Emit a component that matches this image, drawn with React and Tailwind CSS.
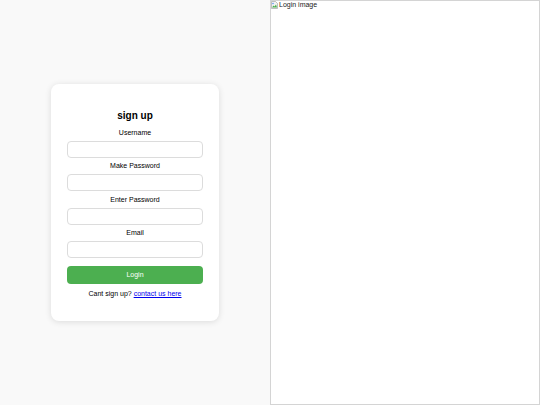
import React from "react";

const font = { fontFamily: '"Liberation Sans", Arial, sans-serif' };

function Field({ label, type = "text" }) {
  return (
    <div className="flex flex-col items-center">
      <label className="text-[7px] leading-[10px] text-black mb-[3px]">{label}</label>
      <input
        type={type}
        className="w-full h-[17px] rounded-[4px] border border-[#dcdcdc] bg-white mb-[3.5px] outline-none"
      />
    </div>
  );
}

// tiny broken-image glyph shown before the alt text
function BrokenImage() {
  return (
    <svg width="7" height="8" viewBox="0 0 7 8" className="shrink-0">
      <path d="M0.5 0.5h4l2 2v5h-6z" fill="#f2f2f2" stroke="#999" strokeWidth="0.6" />
      <path d="M1 6.5l1.5-2 1 1 1.5-2 1 3z" fill="#4caf50" />
      <circle cx="2" cy="2.5" r="0.7" fill="#3b82f6" />
    </svg>
  );
}

export default function App() {
  return (
    <div className="flex w-[540px] h-[405px] bg-[#f9f9f9]" style={font}>
      <div className="w-[270px] h-full flex items-center justify-center">
        <div className="w-[168px] rounded-[8px] bg-white shadow-[0_1px_6px_rgba(0,0,0,0.12)] px-4 pt-[25px] pb-[22px]">
          <h1 className="text-center text-[10px] leading-[14px] font-bold text-black mb-[5px]">sign up</h1>
          <form className="flex flex-col" onSubmit={(e) => e.preventDefault()}>
            <Field label="Username" />
            <Field label="Make Password" type="password" />
            <Field label="Enter Password" type="password" />
            <Field label="Email" type="email" />
            <button
              type="submit"
              className="mt-[4.5px] h-[18px] w-full rounded-[4px] bg-[#4caf50] text-white text-[7px]"
            >
              Login
            </button>
          </form>
          <p className="mt-[5px] text-center text-[7px] leading-[10px] text-black">
            Cant sign up?{" "}
            <a href="#" className="text-[#0000ee] underline">contact us here</a>
          </p>
        </div>
      </div>
      <div className="w-[270px] h-full bg-white border border-[#d4d4d4]">
        <div className="flex items-start gap-[1px] text-[7px] leading-[8px] text-[#222]">
          <BrokenImage />
          <span>Login image</span>
        </div>
      </div>
    </div>
  );
}
